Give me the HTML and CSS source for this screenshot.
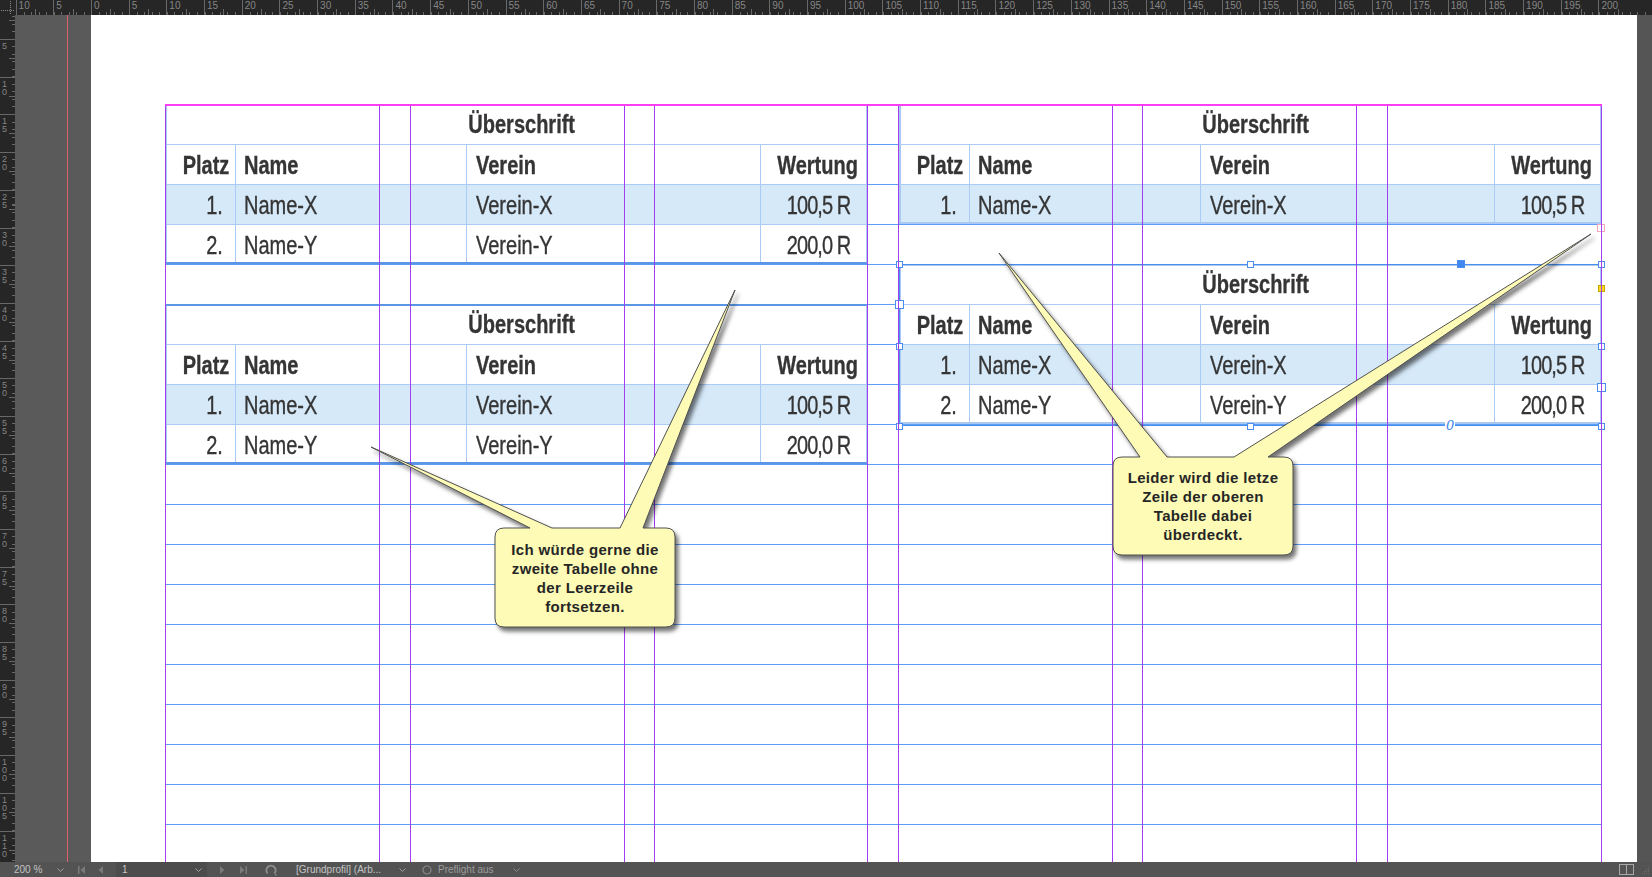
FILE: index.html
```html
<!DOCTYPE html>
<html lang="de">
<head>
<meta charset="utf-8">
<title>Tabellen – Layout</title>
<link rel="stylesheet" href="styles.css">
</head>
<body>
<div class="app">
  <div class="corner">
    <svg width="15" height="15" viewBox="0 0 15 15"><path d="M1 10.5H14M10.5 1V14" stroke="#8a8a8a" stroke-width="1" stroke-dasharray="1 1" fill="none"/></svg>
  </div>
  <div class="hruler">
    <span>10</span><span>5</span><span>0</span><span>5</span><span>10</span><span>15</span><span>20</span><span>25</span><span>30</span><span>35</span><span>40</span><span>45</span><span>50</span><span>55</span><span>60</span><span>65</span><span>70</span><span>75</span><span>80</span><span>85</span><span>90</span><span>95</span><span>100</span><span>105</span><span>110</span><span>115</span><span>120</span><span>125</span><span>130</span><span>135</span><span>140</span><span>145</span><span>150</span><span>155</span><span>160</span><span>165</span><span>170</span><span>175</span><span>180</span><span>185</span><span>190</span><span>195</span><span>200</span>
  </div>
  <div class="vruler">
    <span>5</span><span>1<br>0</span><span>1<br>5</span><span>2<br>0</span><span>2<br>5</span><span>3<br>0</span><span>3<br>5</span><span>4<br>0</span><span>4<br>5</span><span>5<br>0</span><span>5<br>5</span><span>6<br>0</span><span>6<br>5</span><span>7<br>0</span><span>7<br>5</span><span>8<br>0</span><span>8<br>5</span><span>9<br>0</span><span>9<br>5</span><span>1<br>0<br>0</span><span>1<br>0<br>5</span><span>1<br>1<br>0</span>
  </div>

  <div class="workspace">
    <div class="paste-left"></div>
    <div class="page">
      <div class="content">
        <div class="frames">
          <div class="frame">
            <div class="tblwrap edge-b">
              <table class="tbl">
                <colgroup><col class="w1"><col class="w2"><col class="w3"><col class="w4"></colgroup>
                <tr><td class="title" colspan="4"><span>Überschrift</span></td></tr>
                <tr class="head"><td class="r p1"><span>Platz</span></td><td><span>Name</span></td><td class="v"><span>Verein</span></td><td class="r last"><span>Wertung</span></td></tr>
                <tr class="hl"><td class="r p1"><span>1.</span></td><td><span>Name-X</span></td><td class="v"><span>Verein-X</span></td><td class="r last num"><span>100,5 R</span></td></tr>
                <tr><td class="r p1"><span>2.</span></td><td><span>Name-Y</span></td><td class="v"><span>Verein-Y</span></td><td class="r last num"><span>200,0 R</span></td></tr>
              </table>
            </div>
            <div class="blank-row"></div>
            <div class="tblwrap edge-t edge-b">
              <table class="tbl">
                <colgroup><col class="w1"><col class="w2"><col class="w3"><col class="w4"></colgroup>
                <tr><td class="title" colspan="4"><span>Überschrift</span></td></tr>
                <tr class="head"><td class="r p1"><span>Platz</span></td><td><span>Name</span></td><td class="v"><span>Verein</span></td><td class="r last"><span>Wertung</span></td></tr>
                <tr class="hl"><td class="r p1"><span>1.</span></td><td><span>Name-X</span></td><td class="v"><span>Verein-X</span></td><td class="r last num"><span>100,5 R</span></td></tr>
                <tr><td class="r p1"><span>2.</span></td><td><span>Name-Y</span></td><td class="v"><span>Verein-Y</span></td><td class="r last num"><span>200,0 R</span></td></tr>
              </table>
            </div>
          </div>

          <div class="frame">
            <div class="tblwrap">
              <table class="tbl">
                <colgroup><col class="w1"><col class="w2"><col class="w3"><col class="w4"></colgroup>
                <tr><td class="title" colspan="4"><span>Überschrift</span></td></tr>
                <tr class="head"><td class="r p1"><span>Platz</span></td><td><span>Name</span></td><td class="v"><span>Verein</span></td><td class="r last"><span>Wertung</span></td></tr>
                <tr class="hl"><td class="r p1"><span>1.</span></td><td><span>Name-X</span></td><td class="v"><span>Verein-X</span></td><td class="r last num"><span>100,5 R</span></td></tr>
              </table>
            </div>
            <div class="blank-row"></div>
            <div class="frame-sel">
              <div class="tblwrap">
                <table class="tbl">
                  <colgroup><col class="w1"><col class="w2"><col class="w3"><col class="w4"></colgroup>
                  <tr><td class="title" colspan="4"><span>Überschrift</span></td></tr>
                  <tr class="head"><td class="r p1"><span>Platz</span></td><td><span>Name</span></td><td class="v"><span>Verein</span></td><td class="r last"><span>Wertung</span></td></tr>
                  <tr class="hl"><td class="r p1"><span>1.</span></td><td><span>Name-X</span></td><td class="v"><span>Verein-X</span></td><td class="r last num"><span>100,5 R</span></td></tr>
                  <tr><td class="r p1"><span>2.</span></td><td><span>Name-Y</span></td><td class="v"><span>Verein-Y</span></td><td class="r last num"><span>200,0 R</span></td></tr>
                </table>
              </div>
              <span class="handle h-tl"></span>
              <span class="handle h-tm"></span>
              <span class="handle grab"></span>
              <span class="handle h-tr"></span>
              <span class="handle port inport"></span>
              <span class="handle h-ml"></span>
              <span class="handle h-mr"></span>
              <span class="handle port outport-sel"></span>
              <span class="live-corner"></span>
              <span class="handle h-bl"></span>
              <span class="handle h-bm"></span>
              <span class="handle h-br"></span>
              <span class="zero">0</span>
            </div>
            <span class="outport"></span>
          </div>
        </div>

        <div class="guides"><i></i><i></i><i></i><i></i><i></i><i></i></div>
      </div>
    </div>
    <div class="paste-right"></div>
  </div>

  <div class="status">
    <span class="zoomval">200 %</span>
    <svg class="ic chev1" width="7" height="4" viewBox="0 0 7 4"><path d="M0.5 0.5L3.5 3.5L6.5 0.5" stroke="#a0a0a0" fill="none"/></svg>
    <svg class="ic first" width="7" height="8" viewBox="0 0 7 8"><rect x="0" y="0" width="1.5" height="8" fill="#7a7a7a"/><path d="M7 0L2.5 4L7 8Z" fill="#7a7a7a"/></svg>
    <svg class="ic prev" width="5" height="8" viewBox="0 0 5 8"><path d="M5 0L0.5 4L5 8Z" fill="#7a7a7a"/></svg>
    <span class="pagefield"><span>1</span><svg width="7" height="4" viewBox="0 0 7 4"><path d="M0.5 0.5L3.5 3.5L6.5 0.5" stroke="#a0a0a0" fill="none"/></svg></span>
    <svg class="ic next" width="5" height="8" viewBox="0 0 5 8"><path d="M0 0L4.5 4L0 8Z" fill="#7a7a7a"/></svg>
    <svg class="ic last" width="7" height="8" viewBox="0 0 7 8"><path d="M0 0L4.5 4L0 8Z" fill="#7a7a7a"/><rect x="5.5" y="0" width="1.5" height="8" fill="#7a7a7a"/></svg>
    <svg class="ic spin" width="12" height="12" viewBox="0 0 12 12"><path d="M2.6 9.4A4.6 4.6 0 1 1 9.4 9.4" stroke="#8c8c8c" stroke-width="2" fill="none"/><rect x="10" y="10" width="1.5" height="1.5" fill="#8c8c8c"/></svg>
    <span class="profile">[Grundprofil] (Arb...</span>
    <svg class="ic chev2" width="7" height="4" viewBox="0 0 7 4"><path d="M0.5 0.5L3.5 3.5L6.5 0.5" stroke="#a0a0a0" fill="none"/></svg>
    <svg class="ic pfcircle" width="10" height="10" viewBox="0 0 10 10"><circle cx="5" cy="5" r="4" stroke="#8a8a8a" stroke-width="1.2" fill="none"/></svg>
    <span class="preflight">Preflight aus</span>
    <svg class="ic chev3" width="7" height="4" viewBox="0 0 7 4"><path d="M0.5 0.5L3.5 3.5L6.5 0.5" stroke="#8a8a8a" fill="none"/></svg>
    <span class="spacer"></span>
    <svg class="ic split" width="15" height="11" viewBox="0 0 15 11"><rect x="0.5" y="0.5" width="14" height="10" stroke="#a8a8a8" fill="none"/><path d="M7.5 0.5V10.5" stroke="#a8a8a8"/></svg>
    <svg class="ic grip" width="10" height="10" viewBox="0 0 10 10"><g fill="#6c6c6c"><rect x="8" y="2" width="1" height="1"/><rect x="6" y="4" width="1" height="1"/><rect x="8" y="4" width="1" height="1"/><rect x="4" y="6" width="1" height="1"/><rect x="6" y="6" width="1" height="1"/><rect x="8" y="6" width="1" height="1"/><rect x="2" y="8" width="1" height="1"/><rect x="4" y="8" width="1" height="1"/><rect x="6" y="8" width="1" height="1"/><rect x="8" y="8" width="1" height="1"/></g></svg>
  </div>

  <svg class="callouts" width="1652" height="877" viewBox="0 0 1652 877">
    <path d="M504 528L530 528L371 447L552 528L620 528L735 290L643 528L666 528Q675 528 675 537L675 618Q675 627 666 627L504 627Q495 627 495 618L495 537Q495 528 504 528Z" fill="#fdfbb6" stroke="#505050" stroke-width="1"/>
    <path d="M1122 457L1140 457L999 253L1167 457L1234 457L1591 234L1268 457L1284 457Q1293 457 1293 466L1293 546Q1293 555 1284 555L1122 555Q1113 555 1113 546L1113 466Q1113 457 1122 457Z" fill="#fdfbb6" stroke="#505050" stroke-width="1"/>
  </svg>
  <p class="note note-1">Ich würde gerne die<br>zweite Tabelle ohne<br>der Leerzeile<br>fortsetzen.</p>
  <p class="note note-2">Leider wird die letze<br>Zeile der oberen<br>Tabelle dabei<br>überdeckt.</p>
</div>
</body>
</html>
```
FILE: styles.css
```css
* { box-sizing: border-box; }
html, body { margin: 0; padding: 0; }
body {
  background: #535353;
  overflow: hidden;
  font-family: "Liberation Sans", Arial, sans-serif;
}
.app {
  position: relative;
  width: 1652px;
  height: 877px;
  display: grid;
  grid-template-columns: 15px 1637px;
  grid-template-rows: 15px 847px 15px;
  overflow: hidden;
}

/* rulers */
.corner { background: #262626; }
.corner svg { display: block; }
.hruler {
  display: flex;
  padding-left: 0.6px;
  overflow: hidden;
  background-color: #262626;
  background-image:
    repeating-linear-gradient(to right, #686868 0 1px, transparent 1px 7.54px),
    repeating-linear-gradient(to right, transparent 0 18.85px, #686868 18.85px 19.85px, transparent 19.85px 37.7px);
  background-size: 100% 3px, 100% 6px;
  background-position: 0.6px 100%, 0.6px 100%;
  background-repeat: no-repeat;
}
.hruler span {
  flex: 0 0 37.7px;
  height: 100%;
  border-left: 1px solid #686868;
  color: #858585;
  font-size: 10px;
  line-height: 10px;
  padding: 1px 0 0 2px;
}
.vruler {
  display: flex;
  flex-direction: column;
  padding-top: 24.1px;
  overflow: hidden;
  background-color: #262626;
  background-image:
    repeating-linear-gradient(to bottom, #686868 0 1px, transparent 1px 7.54px),
    repeating-linear-gradient(to bottom, transparent 0 18.85px, #686868 18.85px 19.85px, transparent 19.85px 37.7px);
  background-size: 3px calc(100% + 40px), 6px calc(100% + 40px);
  background-position: right 1.48px, right -13.6px;
  background-repeat: no-repeat;
}
.vruler span {
  flex: 0 0 37.7px;
  border-top: 1px solid #686868;
  color: #858585;
  font-size: 9px;
  line-height: 8px;
  padding: 2px 0 0 2px;
}

/* workspace */
.workspace { display: flex; }
.paste-left {
  width: 76px;
  background: #5a5a5a linear-gradient(to right, transparent 52px, #e0606e 52px, #e0606e 53px, transparent 53px);
}
.page {
  width: 1546px;
  background: #fff;
  padding: 89px 0 0 74px;
}
.paste-right { width: 15px; background: #555; }

.content {
  position: relative;
  width: 1437px;
  height: 758px;
  background-image: repeating-linear-gradient(to bottom, #5e9cf5 0 1px, transparent 1px 40px);
}
.frames {
  display: grid;
  grid-template-columns: 703px 703px;
  column-gap: 31px;
  align-items: start;
}
.frame { position: relative; }
.blank-row { height: 40px; }

/* tables */
.tblwrap { position: relative; width: 703px; }
.tblwrap::after {
  content: "";
  position: absolute;
  inset: 0;
  border: 2px solid #a9c9f3;
  pointer-events: none;
}
.tblwrap.edge-b::after { border-bottom-color: #5b96e6; }
.tblwrap.edge-t::after { border-top-color: #5b96e6; }
.tbl {
  width: 703px;
  table-layout: fixed;
  border-collapse: separate;
  border-spacing: 0;
  background: #fff;
  font-family: "Liberation Sans", Arial, sans-serif;
  font-size: 25px;
  line-height: 28px;
  color: #353535;
}
.w1 { width: 71px; }
.w2 { width: 231px; }
.w3 { width: 294px; }
.w4 { width: 107px; }
.tbl tr { height: 40px; }
.tbl td {
  padding: 0 8px;
  border-top: 1px solid #a9cbf5;
  border-right: 1px solid #a9cbf5;
  white-space: nowrap;
  vertical-align: middle;
  text-align: left;
}
.tbl td span {
  display: inline-block;
  vertical-align: top;
  transform: scaleX(0.8);
  transform-origin: left center;
  -webkit-text-stroke: 0.35px #353535;
}
.tbl td.r { text-align: right; }
.tbl td.r span {
  margin-left: -40px;
  transform-origin: right center;
}
.tbl td.title {
  border: 0;
  text-align: center;
  font-weight: 700;
  padding-left: 18px;
}
.tbl td.title span { transform-origin: center center; }
.tbl tr.head td { font-weight: 700; }
.tbl td.last { border-right: 0; padding-right: 10px; }
.tbl td.num { padding-right: 18px; }
.tbl td.num span { letter-spacing: -1.2px; }
.tbl td.p1 { padding-right: 12px; }
.tbl tr.head td.p1 { padding-right: 6px; }
.tbl td.v { padding-left: 9px; }
.tbl tr.hl td { background: #d6e9f9; }

/* selected frame */
.frame-sel { position: relative; padding-bottom: 2px; }
.frame-sel::after {
  content: "";
  position: absolute;
  inset: 0;
  border: 1px solid #4a8ef0;
  pointer-events: none;
}
.handle {
  position: absolute;
  z-index: 1;
  width: 7px;
  height: 7px;
  margin: -3px 0 0 -3px;
  background: #fff;
  border: 1px solid #4a8ef0;
}
.h-tl { left: 0; top: 0; }
.h-tm { left: 351px; top: 0; }
.h-tr { left: 702px; top: 0; }
.h-ml { left: 0; top: 82px; }
.h-mr { left: 702px; top: 82px; }
.h-bl { left: 0; top: 162px; }
.h-bm { left: 351px; top: 162px; }
.h-br { left: 702px; top: 162px; }
.port { width: 9px; height: 9px; margin: -4px 0 0 -4px; }
.inport { left: 0; top: 40px; }
.outport-sel { left: 702px; top: 123px; }
.grab { left: 562px; top: 0; width: 8px; height: 8px; margin: -4px 0 0 -4px; background: #3f86ee; }
.live-corner {
  position: absolute;
  z-index: 1;
  left: 699px;
  top: 21px;
  width: 7px;
  height: 7px;
  background: #f7d915;
  border: 1px solid #c8a500;
}
.zero {
  position: absolute;
  z-index: 1;
  left: 546px;
  top: 155px;
  font: italic 13px/13px "DejaVu Serif", serif;
  color: #3f86ee;
  background: #fff;
  padding: 0 1px;
}
.outport {
  position: absolute;
  left: 698px;
  top: 120px;
  width: 8px;
  height: 8px;
  border: 1px solid #f2a6bb;
  background: #fff;
}

/* guides */
.guides {
  position: absolute;
  inset: 0;
  display: flex;
  border-top: 2px solid #ff3ef4;
  pointer-events: none;
  z-index: 2;
}
.guides i {
  width: 215px;
  margin-left: 30px;
  border-left: 1px solid #a23ef2;
  border-right: 1px solid #a23ef2;
}
.guides i:first-child { margin-left: 0; }
.guides i:nth-child(3), .guides i:nth-child(5) { margin-left: 29px; }

/* status bar */
.status {
  grid-column: 1 / -1;
  display: flex;
  align-items: center;
  background: #535353;
  font-size: 10px;
  color: #c4c4c4;
  white-space: nowrap;
}
.status .ic { display: block; flex: none; }
.zoomval { margin-left: 14px; width: 28px; }
.chev1 { margin-left: 15px; }
.first { margin-left: 14px; }
.prev { margin-left: 13px; }
.pagefield {
  margin-left: 13px;
  width: 91px;
  height: 15px;
  display: flex;
  align-items: center;
  justify-content: space-between;
  padding: 0 5px 0 6px;
  background: #4c4c4c;
}
.pagefield svg { display: block; }
.next { margin-left: 13px; }
.last { margin-left: 15px; }
.spin { margin-left: 18px; }
.profile { margin-left: 19px; width: 90px; }
.chev2 { margin-left: 13px; }
.pfcircle { margin-left: 16px; }
.preflight { margin-left: 6px; width: 57px; color: #9c9c9c; }
.chev3 { margin-left: 18px; }
.spacer { flex: 1; }
.split { margin-right: 6px; }
.grip { margin-right: 2px; }

/* callouts */
.callouts {
  position: absolute;
  left: 0;
  top: 0;
  pointer-events: none;
  z-index: 5;
  filter: drop-shadow(3px 4px 2px rgba(0, 0, 0, 0.55));
}
.note {
  position: absolute;
  z-index: 6;
  margin: 0;
  width: 180px;
  text-align: center;
  font: bold 15px/19px "Liberation Sans", Arial, sans-serif;
  letter-spacing: 0.35px;
  color: #262626;
}
.note-1 { left: 495px; top: 539.5px; }
.note-2 { left: 1113px; top: 467.5px; }
```
